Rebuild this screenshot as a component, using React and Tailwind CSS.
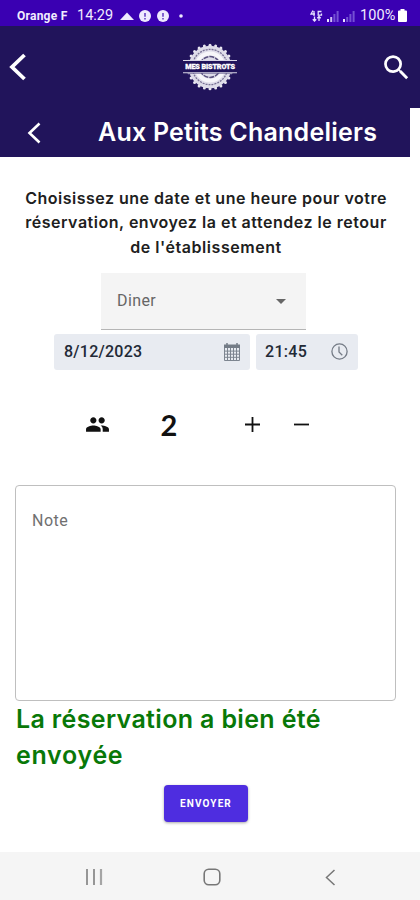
import React, { useState } from 'react';
import { MdArrowDropDown, MdPeople, MdSearch } from 'react-icons/md';

const TEETH = Array.from({ length: 24 }, (_, i) => {
    const angle = (i * Math.PI) / 12;
    return { x: 27 + 21.8 * Math.cos(angle), y: 23 + 21.8 * Math.sin(angle) };
});

// Bottle cap logo with the name across it
const Logo = () => (
    <svg width="54" height="46" viewBox="0 0 54 46" role="img" aria-label="Mes Bistrots" className="overflow-visible">
        {TEETH.map((tooth, index) => (
            <circle key={index} cx={tooth.x} cy={tooth.y} r="1.5" fill="#e9e7f1" />
        ))}
        <circle cx="27" cy="23" r="21.3" fill="#dedce9" />
        <circle cx="27" cy="23" r="17.6" fill="none" stroke="#777094" strokeWidth="1.3" strokeDasharray="2 1" />
        <circle cx="27" cy="23" r="13.5" fill="none" stroke="#f7f6fa" strokeWidth="4" />
        <circle cx="27" cy="23" r="10.4" fill="none" stroke="#59507e" strokeWidth="1.5" strokeDasharray="5 1" />
        <rect x="0" y="16" width="54" height="13.5" fill="#21145b" />
        <path d="M0 16.5h54M0 28.7h54" stroke="#d8d5e5" strokeWidth="1.1" />
        <text
            x="27"
            y="25.4"
            textAnchor="middle"
            fill="#fff"
            stroke="#fff"
            strokeWidth="0.3"
            className="font-['Roboto',sans-serif] text-[7.2px] font-black tracking-[-0.1px]"
        >
            MES BISTROTS
        </text>
    </svg>
);

const Signal = ({ weak }) => (
    <svg width="13" height="12" viewBox="0 0 13 12">
        <path d="M1 9h2v3H1z" fill="#eae4ff" />
        <path d="M4.2 7h2v5h-2z" fill={weak ? '#7551d4' : '#cfc1f5'} />
        <path d="M7.4 4h2v8h-2zM10.6 1h2v11h-2z" fill="#7551d4" />
    </svg>
);

const StatusBar = () => (
    <div className="flex h-[26px] items-center bg-[#3a00b2] pl-[17px] pr-[13px] pt-[5px] font-['Roboto',sans-serif] text-[#f1ecff]">
        <span className="w-[60px] whitespace-nowrap text-[12px] font-bold tracking-[0.25px]">Orange F</span>
        <span className="w-[43px] text-[14.5px]">14:29</span>
        <svg width="66" height="14" viewBox="0 0 66 14" fill="#eee9ff">
            <path d="M0 11 L7 3.5 L14 11z" />
            <circle cx="25" cy="7" r="6" />
            <circle cx="43" cy="7" r="6" />
            <path d="M25 4v3.8M25 9v1.5M43 4v3.8M43 9v1.5" stroke="#6540c4" strokeWidth="1.6" />
            <circle cx="61" cy="7" r="1.8" />
        </svg>
        <div className="ml-auto flex items-center">
            <svg width="13" height="12" viewBox="0 0 13 12" fill="none" stroke="#e5ddff" strokeWidth="1.3" className="mr-[3px]">
                <path d="M3 .5 1 4h4M4 1v5M11.5 1.5H8.2v3.6h3.3V3.4M4.5 11V6.5M2.8 9.3l1.7 1.8 1.7-1.8M9 11V6.5M7.3 8.3 9 6.5l1.7 1.8" />
            </svg>
            <Signal />
            <div className="w-[3px]" />
            <Signal weak />
            <span className="ml-[5px] w-[38px] text-[14.5px] tracking-[0.1px]">100%</span>
            <svg width="9" height="13" viewBox="0 0 9 13" fill="#fff">
                <path d="M2.5 0h4v1.5H8a1 1 0 0 1 1 1V12a1 1 0 0 1-1 1H1a1 1 0 0 1-1-1V2.5a1 1 0 0 1 1-1h1.5z" />
            </svg>
        </div>
    </div>
);

const Header = () => (
    <header className="flex h-[82px] items-center justify-between bg-[#21145b] pl-[9px] pr-[7px] text-white">
        <button type="button" aria-label="Retour">
            <svg width="18" height="28" viewBox="0 0 18 28" fill="none" stroke="currentColor" strokeWidth="3.8">
                <path d="M15.5 2 3 14l12.5 12" />
            </svg>
        </button>
        <div className="ml-[13px]"><Logo /></div>
        <button type="button" aria-label="Rechercher">
            <MdSearch className="size-[33px]" />
        </button>
    </header>
);

const TitleBar = () => (
    <div className="flex h-[49px] w-[410px] items-center bg-[#21145b] pl-[27px] text-white">
        <button type="button" aria-label="Retour">
            <svg width="15" height="22" viewBox="0 0 15 22" fill="none" stroke="currentColor" strokeWidth="2.6">
                <path d="M12.5 1.5 2.5 11l10 9.5" />
            </svg>
        </button>
        <h1 className="ml-[56px] whitespace-nowrap text-[25px] font-semibold tracking-[0.23px]">
            Aux Petits Chandeliers
        </h1>
    </div>
);

const CalendarIcon = () => (
    <svg width="16" height="18" viewBox="0 0 16 18">
        <path d="M0 1.5h16V5H0z" fill="#747c87" />
        <path d="M3 0v2M13 0v2" stroke="#747c87" strokeWidth="1.5" />
        <path
            d="M.5 5v12.5h15V5M3.5 5v12.5M6.5 5v12.5M9.5 5v12.5M12.5 5v12.5M0 8.1h16M0 11.2h16M0 14.3h16"
            fill="none"
            stroke="#7d8590"
            strokeWidth="1"
        />
    </svg>
);

const ClockIcon = () => (
    <svg width="17" height="17" viewBox="0 0 17 17" fill="none" stroke="#747b86" strokeWidth="1.3">
        <circle cx="8.5" cy="8.5" r="7.6" />
        <path d="M8 3.5V9l3.3 3.2" />
    </svg>
);

const NavBar = () => (
    <nav className="flex h-[48px] items-center bg-[#f5f5f5] pl-[85px] pt-[2px] text-[#777]">
        <svg width="18" height="16" viewBox="0 0 18 16" stroke="currentColor" strokeWidth="1.5">
            <path d="M2 0v16M9 0v16" />
            <path d="M16 0v16" stroke="#a5a5a5" strokeWidth="2.2" />
        </svg>
        <svg width="18" height="18" viewBox="0 0 18 18" fill="none" stroke="currentColor" strokeWidth="1.6" className="ml-[100px]">
            <rect x="1.2" y="1.2" width="15.6" height="15.6" rx="4.5" />
        </svg>
        <svg width="11" height="17" viewBox="0 0 11 17" fill="none" stroke="currentColor" strokeWidth="1.5" className="ml-[104px]">
            <path d="M9.5 1 1.5 8.5l8 7.5" />
        </svg>
    </nav>
);

const App = () => {
    const [guests, setGuests] = useState(2);

    return (
        <div className="flex h-[900px] w-[420px] flex-col overflow-hidden bg-white font-['Inter',sans-serif]">
            <StatusBar />
            <Header />
            <TitleBar />

            <main className="flex flex-1 flex-col pt-[29px]">
                <p className="flex w-[412px] flex-col items-center whitespace-nowrap text-[16px] font-semibold leading-[24.3px] text-[#202020]">
                    <span className="tracking-[0.5px]">Choisissez une date et une heure pour votre</span>
                    <span className="tracking-[0.52px]">réservation, envoyez la et attendez le retour</span>
                    <span className="tracking-[0.55px]">de l'établissement</span>
                </p>

                {/* Repas */}
                <div className="ml-[101px] mt-[14px] flex h-[57px] w-[205px] items-center justify-between border-b border-[#b5b5b5] bg-[#f4f4f4] pl-[16px] pr-[13px] font-['Roboto',sans-serif] text-[16px] tracking-[0.4px] text-[#666]">
                    Diner
                    <MdArrowDropDown className="size-[24px]" />
                </div>

                {/* Date et heure */}
                <div className="ml-[54px] mt-1 flex gap-[6px] font-['Roboto',sans-serif] text-[16px] font-medium text-[#222936]">
                    <div className="flex h-[36px] w-[196px] items-center justify-between rounded-[3px] bg-[#e8ebf1] pl-[10px] pr-[10px] tracking-[0.25px]">
                        8/12/2023
                        <CalendarIcon />
                    </div>
                    <div className="flex h-[36px] w-[102px] items-center justify-between rounded-[3px] bg-[#e8ebf1] pl-[9px] pr-[10px] tracking-[0.3px]">
                        21:45
                        <ClockIcon />
                    </div>
                </div>

                {/* Nombre de personnes */}
                <div className="mt-[35px] flex h-[40px] items-center pl-[85px] text-[#111]">
                    <MdPeople className="size-[25px]" />
                    <span className="ml-[50px] w-[18px] text-center font-['Lato',sans-serif] text-[29px] font-bold leading-none">{guests}</span>
                    <button type="button" aria-label="Ajouter" className="ml-[67px]" onClick={() => setGuests(guests + 1)}>
                        <svg width="15" height="15" viewBox="0 0 15 15" stroke="currentColor" strokeWidth="1.8">
                            <path d="M7.5 0v15M0 7.5h15" />
                        </svg>
                    </button>
                    <button type="button" aria-label="Retirer" className="ml-[34px]" onClick={() => setGuests(Math.max(1, guests - 1))}>
                        <svg width="15" height="15" viewBox="0 0 15 15" stroke="currentColor" strokeWidth="1.8">
                            <path d="M0 7.5h15" />
                        </svg>
                    </button>
                </div>

                <textarea
                    placeholder="Note"
                    className="ml-[15px] mt-[40px] block h-[216px] w-[381px] resize-none rounded-[4px] border border-[#bfbfbf] px-[16px] pt-[23px] font-['Roboto',sans-serif] text-[16px] tracking-[0.5px] placeholder:text-[#707070]"
                />

                <p className="ml-[16px] whitespace-nowrap text-[25px] font-semibold leading-[36px] text-[#087808]">
                    <span className="block tracking-[0.35px]">La réservation a bien été</span>
                    <span className="block tracking-[0.7px]">envoyée</span>
                </p>

                <button
                    type="button"
                    className="ml-[164px] mt-[12px] h-[37px] w-[84px] rounded-[4px] bg-[#4e2de0] font-['Roboto',sans-serif] text-[10px] font-bold tracking-[1.1px] text-white shadow-[0_1px_3px_rgba(0,0,0,0.35)]"
                >
                    ENVOYER
                </button>
            </main>

            <NavBar />
        </div>
    );
};

export default App;
